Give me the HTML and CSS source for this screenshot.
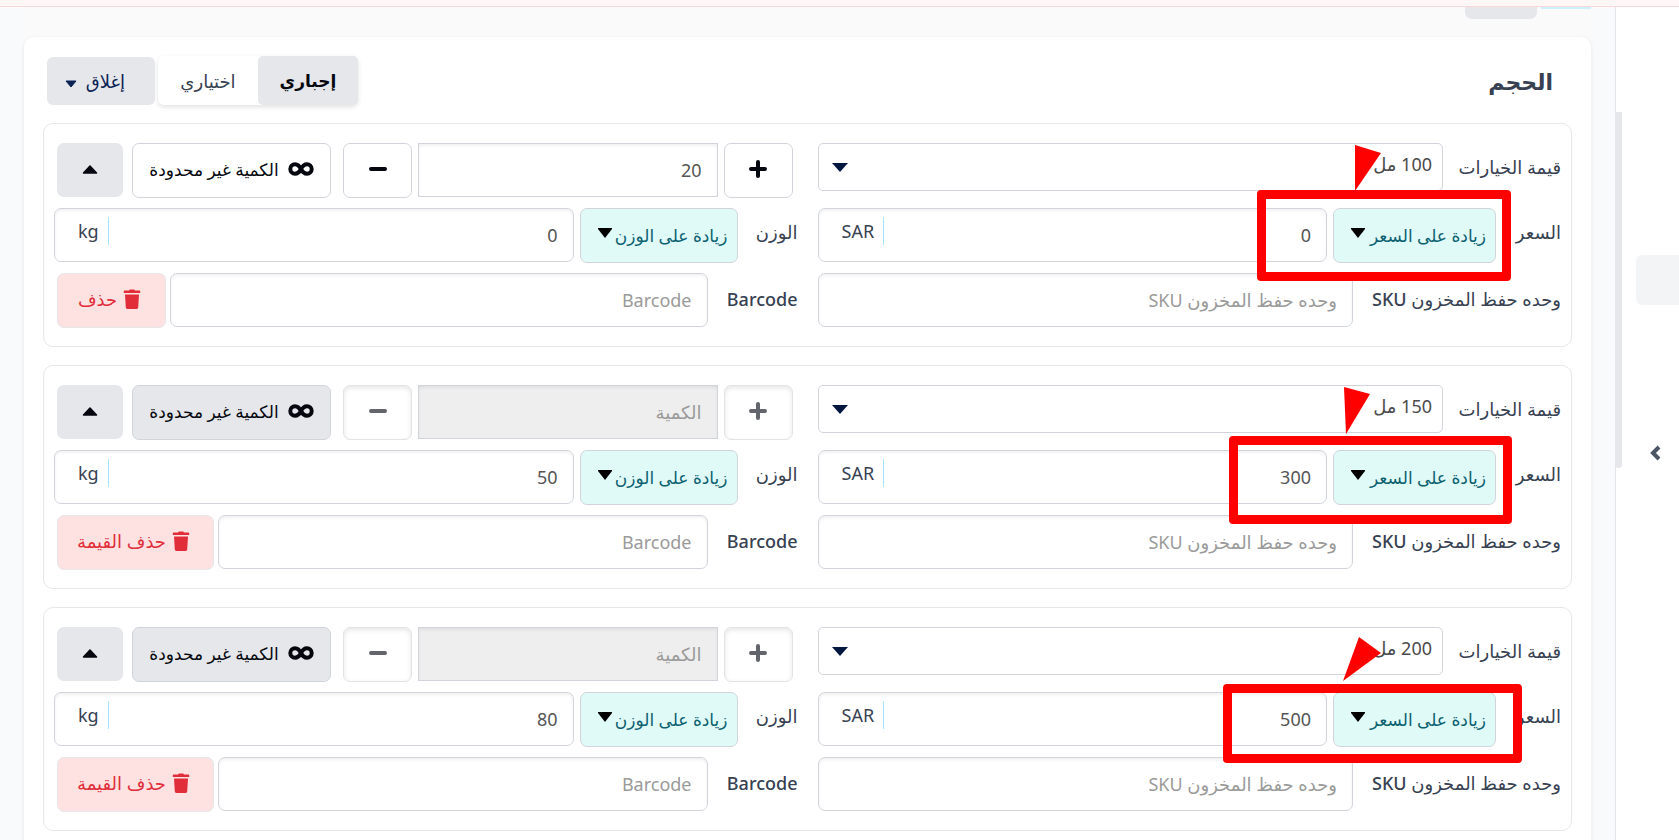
FILE: index.html
```html
<!DOCTYPE html>
<html lang="ar" dir="rtl">
<head>
    <meta charset="UTF-8">
    <title>خيارات المنتج</title>
    <link rel="stylesheet" href="styles.css">
</head>
<body>
    <!-- Shared icons -->
    <svg class="sprite" aria-hidden="true">
        <symbol id="i-plus" viewBox="0 0 18 18"><path d="M9 2v14M2 9h14" stroke="currentColor" stroke-width="4" stroke-linecap="round"/></symbol>
        <symbol id="i-minus" viewBox="0 0 18 18"><path d="M2 9h14" stroke="currentColor" stroke-width="4" stroke-linecap="round"/></symbol>
        <symbol id="i-infinity" viewBox="0 0 26 14"><path d="M13 7.500C11.500 4 9.500 2.300 7 2.300a4.700 4.700 0 0 0 0 9.400c2.500 0 4.500-1.700 6-4.700s3.500-4.700 6-4.700a4.700 4.700 0 0 1 0 9.400c-2.500 0-4.500-1.700-6-4.700z" fill="none" stroke="currentColor" stroke-width="4" stroke-linejoin="round"/></symbol>
        <symbol id="i-up" viewBox="0 0 16 10"><path d="M8 1l6.500 7h-13z" fill="currentColor" stroke="currentColor" stroke-width="1.500" stroke-linejoin="round"/></symbol>
        <symbol id="i-down" viewBox="0 0 12 8"><path d="M1 1h10L6 7z" fill="currentColor" stroke="currentColor" stroke-width="1" stroke-linejoin="round"/></symbol>
        <symbol id="i-trash" viewBox="0 0 18 20"><path d="M6 1.500 6.800.5h4.400l.8 1h4.500a.7.7 0 0 1 .7.7V4H.8V2.200a.7.7 0 0 1 .7-.7zM2 5.500h14l-.8 13a1.500 1.500 0 0 1-1.500 1.400H4.300a1.500 1.500 0 0 1-1.500-1.400z" fill="currentColor"/></symbol>
    </svg>

    <div class="notice"></div>
    <div class="page">
        <aside class="sidebar">
            <div class="scroll-thumb"></div>
            <a class="nav-active" href="#" aria-label="المنتجات"></a>
            <button class="collapse" aria-label="طي القائمة">
                <svg width="12" height="16" viewBox="0 0 12 16"><path d="M10 2 4 8l6 6" fill="none" stroke="currentColor" stroke-width="4"/></svg>
            </button>
        </aside>

        <main class="main">
            <div class="content">
                <div class="tabs">
                    <span class="tab-line"></span>
                    <span class="tab-pill"></span>
                </div>

                <section class="card">
                    <header class="card-head">
                        <h2>الحجم</h2>
                        <div class="toggle">
                            <button class="active">إجباري</button>
                            <button>اختياري</button>
                        </div>
                        <button class="close">إغلاق <svg width="12" height="8"><use href="#i-down"/></svg></button>
                    </header>

                    <!-- Option 1 -->
                    <div class="option">
                        <div class="half">
                            <div class="line">
                                <label class="w-value" for="value1">قيمة الخيارات</label>
                                <select class="value" id="value1"><option>100 مل</option></select>
                            </div>
                            <div class="line">
                                <label class="w-price" for="price1">السعر</label>
                                <select class="kind kind-price" aria-label="نوع السعر"><option>زيادة على السعر</option></select>
                                <div class="field"><input type="text" id="price1" value="0"><span class="unit">SAR</span></div>
                            </div>
                            <div class="line">
                                <label class="w-sku" for="sku1">وحده حفظ المخزون SKU</label>
                                <input class="box" type="text" id="sku1" placeholder="وحده حفظ المخزون SKU">
                            </div>
                        </div>
                        <div class="half">
                            <div class="line stock">
                                <button class="step" aria-label="زيادة"><svg width="18" height="18"><use href="#i-plus"/></svg></button>
                                <input class="box qty" type="text" value="20" aria-label="الكمية">
                                <button class="step" aria-label="إنقاص"><svg width="18" height="18"><use href="#i-minus"/></svg></button>
                                <button class="unlimited"><svg width="26" height="14"><use href="#i-infinity"/></svg>الكمية غير محدودة</button>
                                <button class="fold" aria-label="طي"><svg width="16" height="10"><use href="#i-up"/></svg></button>
                            </div>
                            <div class="line">
                                <label class="w-weight" for="weight1">الوزن</label>
                                <select class="kind kind-weight" aria-label="نوع الوزن"><option>زيادة على الوزن</option></select>
                                <div class="field"><input type="text" id="weight1" value="0"><span class="unit">kg</span></div>
                            </div>
                            <div class="line last">
                                <label class="w-barcode" for="barcode1">Barcode</label>
                                <input class="box" type="text" id="barcode1" placeholder="Barcode">
                                <button class="delete"><svg width="18" height="20"><use href="#i-trash"/></svg>حذف</button>
                            </div>
                        </div>
                        <div class="mark mark-1"></div>
                        <svg class="arrow arrow-1" width="26" height="46"><path d="M0 0l26 8L0 46z"/></svg>
                    </div>

                    <!-- Option 2 -->
                    <div class="option">
                        <div class="half">
                            <div class="line">
                                <label class="w-value" for="value2">قيمة الخيارات</label>
                                <select class="value" id="value2"><option>150 مل</option></select>
                            </div>
                            <div class="line">
                                <label class="w-price" for="price2">السعر</label>
                                <select class="kind kind-price" aria-label="نوع السعر"><option>زيادة على السعر</option></select>
                                <div class="field"><input type="text" id="price2" value="300"><span class="unit">SAR</span></div>
                            </div>
                            <div class="line">
                                <label class="w-sku" for="sku2">وحده حفظ المخزون SKU</label>
                                <input class="box" type="text" id="sku2" placeholder="وحده حفظ المخزون SKU">
                            </div>
                        </div>
                        <div class="half">
                            <div class="line stock">
                                <button class="step" aria-label="زيادة" disabled><svg width="18" height="18"><use href="#i-plus"/></svg></button>
                                <input class="box qty" type="text" placeholder="الكمية" aria-label="الكمية" disabled>
                                <button class="step" aria-label="إنقاص" disabled><svg width="18" height="18"><use href="#i-minus"/></svg></button>
                                <button class="unlimited on"><svg width="26" height="14"><use href="#i-infinity"/></svg>الكمية غير محدودة</button>
                                <button class="fold" aria-label="طي"><svg width="16" height="10"><use href="#i-up"/></svg></button>
                            </div>
                            <div class="line">
                                <label class="w-weight" for="weight2">الوزن</label>
                                <select class="kind kind-weight" aria-label="نوع الوزن"><option>زيادة على الوزن</option></select>
                                <div class="field"><input type="text" id="weight2" value="50"><span class="unit">kg</span></div>
                            </div>
                            <div class="line last">
                                <label class="w-barcode" for="barcode2">Barcode</label>
                                <input class="box" type="text" id="barcode2" placeholder="Barcode">
                                <button class="delete wide"><svg width="18" height="20"><use href="#i-trash"/></svg>حذف القيمة</button>
                            </div>
                        </div>
                        <div class="mark mark-2"></div>
                        <svg class="arrow arrow-2" width="26" height="47"><path d="M0 0l26 7L2 47z"/></svg>
                    </div>

                    <!-- Option 3 -->
                    <div class="option">
                        <div class="half">
                            <div class="line">
                                <label class="w-value" for="value3">قيمة الخيارات</label>
                                <select class="value" id="value3"><option>200 مل</option></select>
                            </div>
                            <div class="line">
                                <label class="w-price" for="price3">السعر</label>
                                <select class="kind kind-price" aria-label="نوع السعر"><option>زيادة على السعر</option></select>
                                <div class="field"><input type="text" id="price3" value="500"><span class="unit">SAR</span></div>
                            </div>
                            <div class="line">
                                <label class="w-sku" for="sku3">وحده حفظ المخزون SKU</label>
                                <input class="box" type="text" id="sku3" placeholder="وحده حفظ المخزون SKU">
                            </div>
                        </div>
                        <div class="half">
                            <div class="line stock">
                                <button class="step" aria-label="زيادة" disabled><svg width="18" height="18"><use href="#i-plus"/></svg></button>
                                <input class="box qty" type="text" placeholder="الكمية" aria-label="الكمية" disabled>
                                <button class="step" aria-label="إنقاص" disabled><svg width="18" height="18"><use href="#i-minus"/></svg></button>
                                <button class="unlimited on"><svg width="26" height="14"><use href="#i-infinity"/></svg>الكمية غير محدودة</button>
                                <button class="fold" aria-label="طي"><svg width="16" height="10"><use href="#i-up"/></svg></button>
                            </div>
                            <div class="line">
                                <label class="w-weight" for="weight3">الوزن</label>
                                <select class="kind kind-weight" aria-label="نوع الوزن"><option>زيادة على الوزن</option></select>
                                <div class="field"><input type="text" id="weight3" value="80"><span class="unit">kg</span></div>
                            </div>
                            <div class="line last">
                                <label class="w-barcode" for="barcode3">Barcode</label>
                                <input class="box" type="text" id="barcode3" placeholder="Barcode">
                                <button class="delete wide"><svg width="18" height="20"><use href="#i-trash"/></svg>حذف القيمة</button>
                            </div>
                        </div>
                        <div class="mark mark-3"></div>
                        <svg class="arrow arrow-3" width="38" height="44"><path d="M16 0l22 16L0 44z"/></svg>
                    </div>
                </section>
            </div>
        </main>
    </div>
</body>
</html>
```

FILE: styles.css
```css
* { box-sizing: border-box; }
body { margin: 0; height: 100vh; overflow: hidden; display: flex; flex-direction: column; background: #fff; color: #374151; font-family: "Noto Sans", "DejaVu Sans", sans-serif; font-size: 18px; }
button, input, select { font: inherit; color: inherit; margin: 0; }
button { border: none; padding: 0; cursor: pointer; }
.sprite { display: none; }

.notice { flex: none; height: 7px; background: #fff7f6; border-bottom: 1px solid #f8d9d9; }
.page { flex: 1; display: flex; min-height: 0; }

/* Sidebar */
.sidebar { position: relative; flex: none; width: 64px; border-left: 1px solid #e2e4e9; display: flex; flex-direction: column; }
.scroll-thumb { position: absolute; left: -1px; top: 105px; width: 7px; height: 356px; background: #e5e7eb; border-radius: 0 0 4px 4px; }
.nav-active { flex: none; width: 43px; height: 50px; margin-top: 248px; background: #f3f4f6; border-radius: 6px 0 0 6px; }
.collapse { width: 12px; height: 16px; margin: 140px 18px 0; background: none; color: #4b5563; }
.collapse svg { display: block; }

/* Card */
.main { flex: 1; min-width: 0; padding: 0 24px; background: #f9fafc; overflow: hidden; }
.content { min-height: 100%; background: #fafafa; }
.tabs { display: flex; gap: 4px; height: 30px; align-items: flex-start; }
.tab-line { width: 50px; height: 2px; background: #cdf1fb; }
.tab-pill { width: 72px; height: 12px; background: #e5e7eb; border-radius: 0 0 7px 7px; }
.card { min-height: 100vh; padding: 19px 19px 24px; background: #fff; border-radius: 10px; box-shadow: 0 1px 4px rgba(0, 0, 0, .08); }
.card-head { display: flex; align-items: center; margin-bottom: 18px; padding: 0 19px 0 4px; }
.card-head h2 { flex: 1; margin: 0; font-size: 22px; line-height: 32px; font-weight: 700; }
.toggle { display: flex; border-radius: 6px; background: #fff; box-shadow: 0 2px 5px rgba(0, 0, 0, .12); }
.toggle button { width: 100px; height: 49px; background: none; border-radius: 5px; }
.toggle .active { background: #e5e7eb; color: #05070f; font-size: 17px; font-weight: 600; }
.close { width: 108px; height: 48px; margin-right: 3px; padding-right: 12px; background: #e5e7eb; border-radius: 6px; color: #0b2354; }
.close svg { margin-right: 4px; }

/* Option rows */
.option { position: relative; display: grid; grid-template-columns: 1fr 1fr; gap: 20px; padding: 19px 10px 18px; margin-bottom: 18px; border: 1px solid #e5e7eb; border-radius: 10px; }
.half { display: flex; flex-direction: column; gap: 10px; min-width: 0; }
.line { display: flex; height: 55px; }
.line > label { flex: none; line-height: 48px; font-weight: 500; white-space: nowrap; }
.line > .w-sku, .line > .w-barcode { line-height: 52px; }
.w-value { width: 118px; }
.w-price { width: 65px; }
.w-sku { width: 208px; }
.w-weight { width: 60px; }
.w-barcode { width: 90px; }

.value { flex: 1; height: 48px; padding: 0 10px 6px; appearance: none; color: #4b4b4b; border: 1px solid #d1d5db; border-radius: 5px; background: #fff url("data:image/svg+xml,%3Csvg xmlns='http://www.w3.org/2000/svg' width='16' height='9'%3E%3Cpath d='M0 0h16L8 9z' fill='%23031640'/%3E%3C/svg%3E") no-repeat 13px 19px; }
.kind { flex: none; height: 55px; padding: 0 9px; margin-left: 6px; appearance: none; font-size: 17px; border: 1px solid #d1d5db; border-radius: 7px; color: #0b6170; background: #e0faf8 url("data:image/svg+xml,%3Csvg xmlns='http://www.w3.org/2000/svg' width='14' height='10'%3E%3Cpath d='M0 0h14v1L7 10 0 1z'/%3E%3C/svg%3E") no-repeat 17px 19px; }
.kind-price { width: 163px; }
.kind-weight { width: 158px; }

.box, .field { flex: 1; min-width: 0; height: 54px; border: 1px solid #d1d5db; border-radius: 7px; background: #fff; box-shadow: inset 0 2px 3px rgba(0, 0, 0, .06); }
.box { padding: 0 15px; color: #555; }
.box::placeholder { color: #9a9a9a; opacity: 1; }
.field { display: flex; }
.field input { flex: 1; min-width: 0; padding: 0 15px; border: none; background: none; color: #555; }
.unit { height: 28px; margin: 8px 0 0 23px; padding-right: 9px; border-right: 1px solid #a5e4fb; line-height: 28px; }

.stock { padding-right: 5px; padding-left: 3px; color: #05070f; }
.step { flex: none; width: 69px; height: 55px; background: #fff; border: 1px solid #d1d5db; border-radius: 7px; }
.step:disabled { border-color: #e1e3e6; color: #63656c; box-shadow: inset 0 2px 5px rgba(0, 0, 0, .1); }
.qty { margin: 0 6px; border-radius: 0; }
.qty:disabled { background: #eee; }
.unlimited { display: flex; align-items: center; justify-content: center; gap: 9px; width: 199px; height: 55px; margin: 0 12px 0 9px; padding-bottom: 3px; background: #fff; border: 1px solid #d1d5db; border-radius: 7px; font-size: 17px; white-space: nowrap; }
.unlimited.on { background: #e5e7eb; }
.fold { flex: none; width: 66px; height: 54px; padding-bottom: 5px; background: #e5e7eb; border-radius: 7px; }

.last { padding-left: 3px; }
.delete { display: flex; align-items: center; justify-content: center; gap: 6px; width: 109px; height: 55px; margin-right: 4px; padding: 0 4px 4px 0; background: #fee2e2; border: 1px solid #e5e7eb; border-radius: 7px; color: #e12d39; }
.delete.wide { width: 157px; }

/* Highlights over the price fields */
.mark { position: absolute; border: 9px solid #f00; border-radius: 4px; }
.mark-1 { top: 66px; right: 60px; width: 254px; height: 91px; }
.mark-2 { top: 70px; right: 59px; width: 283px; height: 88px; }
.mark-3 { top: 76px; right: 49px; width: 299px; height: 79px; }
.arrow { position: absolute; fill: #f00; }
.arrow-1 { top: 21px; right: 190px; }
.arrow-2 { top: 21px; right: 201px; }
.arrow-3 { top: 29px; right: 190px; }
```
